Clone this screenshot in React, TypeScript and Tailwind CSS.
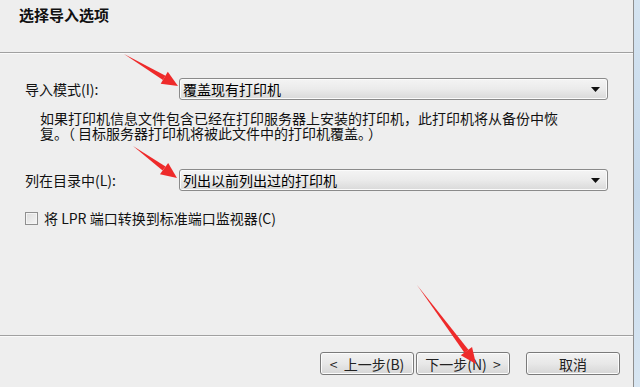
const font = { fontFamily: '"Noto Sans CJK SC", "Liberation Sans", sans-serif' };

function Select({ value }: { value: string }) {
  return (
    <div className="w-[429px] h-[22px] flex items-center justify-between pl-[3px] pr-[7px] rounded-[3px] border border-[#8a8a8a] bg-gradient-to-b from-[#f4f4f4] via-[#ebebeb] to-[#d9d9d9] shadow-[inset_0_0_0_1px_#fbfbfb]">
      <span className="text-[14px] leading-[16px] text-black">{value}</span>
      <svg width="9" height="5" viewBox="0 0 9 5">
        <path d="M0 0 L9 0 L4.5 5 Z" fill="#111" />
      </svg>
    </div>
  );
}

function Button({ children, w }: { children: React.ReactNode; w: string }) {
  return (
    <div className={`${w} h-[23px] flex items-center justify-center rounded-[3px] border border-[#7a7a7a] bg-gradient-to-b from-[#f2f2f2] via-[#e8e8e8] to-[#d6d6d6] shadow-[inset_0_0_0_1px_#fcfcfc] text-[14px] leading-[16px] text-[#222]`}>
      {children}
    </div>
  );
}

function Arrow({ x1, y1, x2, y2 }: { x1: number; y1: number; x2: number; y2: number }) {
  const dx = x2 - x1;
  const dy = y2 - y1;
  const len = Math.hypot(dx, dy);
  const ux = dx / len;
  const uy = dy / len;
  const hx = x2 - ux * 16;
  const hy = y2 - uy * 16;
  const px = -uy;
  const py = ux;
  const head = `${x2},${y2} ${hx + px * 7},${hy + py * 7} ${hx - px * 7},${hy - py * 7}`;
  const body = `${x1},${y1} ${hx + px * 2.5},${hy + py * 2.5} ${hx - px * 2.5},${hy - py * 2.5}`;
  return (
    <g fill="#ee2a2a">
      <polygon points={body} />
      <polygon points={head} />
    </g>
  );
}

export default function App() {
  return (
    <div className="w-[640px] h-[387px] flex bg-[#eeeeee] overflow-hidden relative" style={font}>
      <div className="w-[634px] flex flex-col border-r border-[#8e8e8e]">
        {/* Header */}
        <div className="h-[52px] pl-[19px] pt-[6px]">
          <h1 className="text-[15px] leading-[18px] font-bold text-[#111]">选择导入选项</h1>
        </div>
        <div className="h-px bg-[#a0a0a0]" />
        <div className="h-px bg-[#fafafa]" />

        {/* Body */}
        <div className="flex-1 pl-[25px] pt-[24px]">
          <div className="flex items-center h-[22px]">
            <span className="w-[154px] text-[14px] leading-[16px] text-[#111]">导入模式(I):</span>
            <Select value="覆盖现有打印机" />
          </div>
          <div className="mt-[11px] ml-[15px] w-[540px] text-[14px] leading-[15px] text-[#111]">
            <div>如果打印机信息文件包含已经在打印服务器上安装的打印机，此打印机将从备份中恢</div>
            <div>复。<span className="tracking-[3px]">（</span>目标服务器打印机将被此文件中的打印机覆盖。<span className="pl-[3px]">）</span></div>
          </div>
          <div className="mt-[28px] flex items-center h-[22px]">
            <span className="w-[154px] text-[14px] leading-[16px] text-[#111]">列在目录中(L):</span>
            <Select value="列出以前列出过的打印机" />
          </div>
          <div className="mt-[19px] flex items-center gap-[6px]">
            <div className="w-[13px] h-[13px] border border-[#8f8f8f] bg-gradient-to-br from-[#dcdcdc] to-[#f6f6f6] shadow-[inset_0_0_0_1px_#f4f4f4]" />
            <span className="text-[14px] leading-[16px] text-[#111]">将 LPR 端口转换到标准端口监视器(C)</span>
          </div>
        </div>

        {/* Footer */}
        <div className="h-px bg-[#a0a0a0]" />
        <div className="h-px bg-[#fafafa]" />
        <div className="h-[50px] flex items-start pt-[15px] pl-[320px]">
          <Button w="w-[94px]">&lt;&nbsp; 上一步(B)</Button>
          <div className="w-[2px]" />
          <Button w="w-[94px]">下一步(N)&nbsp; &gt;</Button>
          <div className="w-[16px]" />
          <Button w="w-[94px]">取消</Button>
        </div>
      </div>
      <div className="flex-1 bg-gradient-to-b from-[#d5e4f1] via-[#c5d8ea] to-[#d8e6f2]" />

      {/* Red annotation arrows */}
      <svg className="absolute inset-0 pointer-events-none" width="640" height="387">
        <Arrow x1={124} y1={54} x2={178} y2={86} />
        <Arrow x1={133} y1={146} x2={177} y2={178} />
        <Arrow x1={417} y1={285} x2={476} y2={364} />
      </svg>
    </div>
  );
}
